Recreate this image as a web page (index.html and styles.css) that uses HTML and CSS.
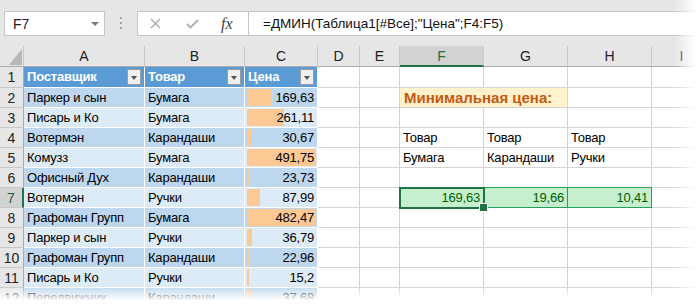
FILE: index.html
```html
<!DOCTYPE html>
<html lang="ru">
<head>
  <meta charset="UTF-8" />
  <title>ДМИН - Excel</title>
  <link rel="stylesheet" href="styles.css">
</head>
<body>

<div class="window">
  <div class="formula-bar">
    <div class="name-box">
      <span>F7</span>
      <span class="caret"></span>
    </div>
    <div class="grip">
      <svg width="3" height="13" viewBox="0 0 3 13"><rect x="0" y="0" width="2" height="2" fill="#a6a6a6"/><rect x="0" y="5" width="2" height="2" fill="#a6a6a6"/><rect x="0" y="10" width="2" height="2" fill="#a6a6a6"/></svg>
    </div>
    <div class="fx-box">
      <svg class="ico-x" width="11" height="11" viewBox="0 0 11 11"><path d="M1 1 L10 10 M10 1 L1 10" stroke="#a8a8a8" stroke-width="1.3"/></svg>
      <svg class="ico-ok" width="13" height="10" viewBox="0 0 13 10"><path d="M1 5 L4.5 8.5 L12 1" fill="none" stroke="#b4b4b4" stroke-width="2"/></svg>
      <span class="fx">fx</span>
    </div>
    <div class="formula">=ДМИН(Таблица1[#Все];"Цена";F4:F5)</div>
  </div>

  <div class="sheet">
    <!-- column headers -->
    <div class="c ch corner">
      <svg width="14" height="16" viewBox="0 0 14 16"><polygon points="13,0 13,16 0,16" fill="#b7b7b7"/></svg>
    </div>
    <div class="c ch">A</div>
    <div class="c ch">B</div>
    <div class="c ch">C</div>
    <div class="c ch">D</div>
    <div class="c ch">E</div>
    <div class="c ch sel">F</div>
    <div class="c ch">G</div>
    <div class="c ch">H</div>
    <div class="c ch">I</div>

    <div class="row">
      <div class="c rh">1</div>
      <div class="c t th">Поставщик<span class="dd"></span></div>
      <div class="c t th">Товар<span class="dd"></span></div>
      <div class="c t th">Цена<span class="dd"></span></div>
      <div class="c"></div><div class="c"></div><div class="c"></div><div class="c"></div><div class="c"></div><div class="c"></div>
    </div>

    <div class="row dark">
      <div class="c rh">2</div>
      <div class="c t">Паркер и сын</div>
      <div class="c t">Бумага</div>
      <div class="c t num bar" style="--w:25px">169,63</div>
      <div class="c"></div><div class="c"></div>
      <div class="c title">Минимальная цена:</div>
      <div class="c"></div><div class="c"></div>
    </div>

    <div class="row light">
      <div class="c rh">3</div>
      <div class="c t">Писарь и Ко</div>
      <div class="c t">Бумага</div>
      <div class="c t num bar" style="--w:37px">261,11</div>
      <div class="c"></div><div class="c"></div><div class="c"></div><div class="c"></div><div class="c"></div><div class="c"></div>
    </div>

    <div class="row dark">
      <div class="c rh">4</div>
      <div class="c t">Вотермэн</div>
      <div class="c t">Карандаши</div>
      <div class="c t num bar" style="--w:4px">30,67</div>
      <div class="c"></div><div class="c"></div>
      <div class="c">Товар</div><div class="c">Товар</div><div class="c">Товар</div>
      <div class="c"></div>
    </div>

    <div class="row light">
      <div class="c rh">5</div>
      <div class="c t">Комузз</div>
      <div class="c t">Бумага</div>
      <div class="c t num bar" style="--w:69px">491,75</div>
      <div class="c"></div><div class="c"></div>
      <div class="c">Бумага</div><div class="c">Карандаши</div><div class="c">Ручки</div>
      <div class="c"></div>
    </div>

    <div class="row dark">
      <div class="c rh">6</div>
      <div class="c t">Офисный Дух</div>
      <div class="c t">Карандаши</div>
      <div class="c t num bar" style="--w:3px">23,73</div>
      <div class="c"></div><div class="c"></div><div class="c"></div><div class="c"></div><div class="c"></div><div class="c"></div>
    </div>

    <div class="row light">
      <div class="c rh sel">7</div>
      <div class="c t">Вотермэн</div>
      <div class="c t">Ручки</div>
      <div class="c t num bar" style="--w:13px">87,99</div>
      <div class="c"></div><div class="c"></div>
      <div class="c good active">169,63</div>
      <div class="c good framed">19,66</div>
      <div class="c good framed">10,41</div>
      <div class="c"></div>
    </div>

    <div class="row dark">
      <div class="c rh">8</div>
      <div class="c t">Графоман Групп</div>
      <div class="c t">Бумага</div>
      <div class="c t num bar" style="--w:68px">482,47</div>
      <div class="c"></div><div class="c"></div><div class="c"></div><div class="c"></div><div class="c"></div><div class="c"></div>
    </div>

    <div class="row light">
      <div class="c rh">9</div>
      <div class="c t">Паркер и сын</div>
      <div class="c t">Ручки</div>
      <div class="c t num bar" style="--w:5px">36,79</div>
      <div class="c"></div><div class="c"></div><div class="c"></div><div class="c"></div><div class="c"></div><div class="c"></div>
    </div>

    <div class="row dark">
      <div class="c rh">10</div>
      <div class="c t">Графоман Групп</div>
      <div class="c t">Карандаши</div>
      <div class="c t num bar" style="--w:3px">22,96</div>
      <div class="c"></div><div class="c"></div><div class="c"></div><div class="c"></div><div class="c"></div><div class="c"></div>
    </div>

    <div class="row light">
      <div class="c rh">11</div>
      <div class="c t">Писарь и Ко</div>
      <div class="c t">Ручки</div>
      <div class="c t num bar" style="--w:2px">15,2</div>
      <div class="c"></div><div class="c"></div><div class="c"></div><div class="c"></div><div class="c"></div><div class="c"></div>
    </div>

    <div class="row dark">
      <div class="c rh">12</div>
      <div class="c t">Передвижник</div>
      <div class="c t">Карандаши</div>
      <div class="c t num bar" style="--w:5px">37,68</div>
      <div class="c"></div><div class="c"></div><div class="c"></div><div class="c"></div><div class="c"></div><div class="c"></div>
    </div>
  </div>

  <!-- torn edge fade -->
  <div class="fade-right"></div>
  <div class="fade-bottom"></div>
</div>

</body>
</html>
```

FILE: styles.css
```css
* { box-sizing: border-box; }

body {
  margin: 0;
  font-family: "Liberation Sans", Arial, sans-serif;
  background: #fff;
  color: #000;
}

.window {
  position: relative;
  width: 700px;
  height: 304px;
  overflow: hidden;
  background: #e6e6e6;
}

/* Formula bar */
.formula-bar {
  display: flex;
  height: 46px;
  padding: 11px 0 10px 4px;
  font-size: 14px;
}

.name-box {
  width: 101px;
  background: #fff;
  border: 1px solid #c6c6c6;
  display: flex;
  align-items: center;
  justify-content: space-between;
  padding: 0 5px 0 8px;
  color: #222;
}

.caret {
  width: 0;
  height: 0;
  border-left: 4px solid transparent;
  border-right: 4px solid transparent;
  border-top: 4px solid #7a7a7a;
}

.grip {
  width: 32px;
  display: flex;
  align-items: center;
  justify-content: center;
}

.fx-box {
  width: 112px;
  background: #fff;
  border: 1px solid #c6c6c6;
  display: flex;
  align-items: center;
  position: relative;
}

.ico-x { margin-left: 12px; }
.ico-ok { margin-left: 25px; }

.fx {
  margin-left: 22px;
  font-family: "Liberation Serif", serif;
  font-style: italic;
  font-size: 16px;
  color: #444;
}

.formula {
  flex: 1;
  background: #fff;
  border: 1px solid #c6c6c6;
  border-left: none;
  padding-left: 14px;
  display: flex;
  align-items: center;
  white-space: nowrap;
  font-size: 13.5px;
  color: #111;
}

/* Sheet grid */
.sheet {
  display: grid;
  grid-template-columns: 24px 121px 100px 73px 42px 40px 84px 84px 84px 60px;
  grid-template-rows: 21px 21px repeat(11, 20px);
  background: #fff;
  font-size: 13px;
  letter-spacing: -0.2px;
}

.row { display: contents; }

.c {
  border-right: 1px solid #d4d4d4;
  border-bottom: 1px solid #d4d4d4;
  padding: 0 3px;
  display: flex;
  align-items: flex-end;
  line-height: 18px;
  white-space: nowrap;
  overflow: hidden;
}

.ch {
  background: #e6e6e6;
  border-right: 1px solid #c8c8c8;
  border-bottom: 1px solid #ababab;
  justify-content: center;
  align-items: center;
  font-size: 14px;
  letter-spacing: 0;
  color: #222;
}

.ch.sel {
  background: #d2d2d2;
  color: #217346;
  border-bottom: 2px solid #217346;
}

.corner {
  justify-content: flex-end;
  align-items: flex-end;
  padding: 0 0 1px 0;
}

.rh {
  background: #e6e6e6;
  border-right: 1px solid #ababab;
  border-bottom: 1px solid #c8c8c8;
  justify-content: center;
  align-items: center;
  padding: 0;
  font-size: 14px;
  letter-spacing: 0;
  color: #222;
}

.rh.sel {
  background: #d2d2d2;
  border-right: 2px solid #217346;
  color: #1d5b38;
}

/* Table1 */
.t {
  border-right: 1px solid #fff;
  border-bottom: 1px solid #fff;
}

.th {
  background: #5b9bd5;
  color: #fff;
  font-weight: bold;
  justify-content: space-between;
  align-items: center;
}

.dd {
  width: 14px;
  height: 16px;
  background: #f0f0f0;
  border: 1px solid #9c9c9c;
  position: relative;
}

.dd::after {
  content: "";
  position: absolute;
  left: 3px;
  top: 6px;
  border-left: 3px solid transparent;
  border-right: 3px solid transparent;
  border-top: 4px solid #555;
}

.dark .t { background-color: #bdd7ee; }
.light .t { background-color: #ddebf7; }

.num { justify-content: flex-end; }

.bar {
  background-image: linear-gradient(#fcc894, #fcc894);
  background-repeat: no-repeat;
  background-position: 2px 1px;
  background-size: var(--w) 17px;
}

/* Right block */
.title {
  grid-column: span 2;
  background: #fff2cc;
  color: #c65911;
  font-weight: bold;
  font-size: 15px;
  letter-spacing: 0;
  padding-left: 4px;
  align-items: center;
}

.good {
  background: #c6efce;
  color: #006100;
  justify-content: flex-end;
}

.active {
  position: relative;
  overflow: visible;
  z-index: 2;
  outline: 2px solid #217346;
  outline-offset: -1px;
}

.active::after {
  content: "";
  position: absolute;
  right: -5px;
  bottom: -5px;
  width: 7px;
  height: 7px;
  background: #217346;
  border: 1px solid #fff;
}

.framed {
  border-right-color: #21a35a;
  border-bottom-color: #21a35a;
  box-shadow: 0 -1px 0 #21a35a;
}

/* torn edge */
.fade-right {
  position: absolute;
  top: 0;
  right: 0;
  bottom: 0;
  width: 26px;
  background: linear-gradient(to right, rgba(255,255,255,0), #fff 85%);
  z-index: 5;
}

.fade-bottom {
  position: absolute;
  left: 0;
  right: 0;
  bottom: 0;
  height: 18px;
  background: linear-gradient(to bottom, rgba(255,255,255,0), #fff 80%);
  z-index: 5;
}
```
